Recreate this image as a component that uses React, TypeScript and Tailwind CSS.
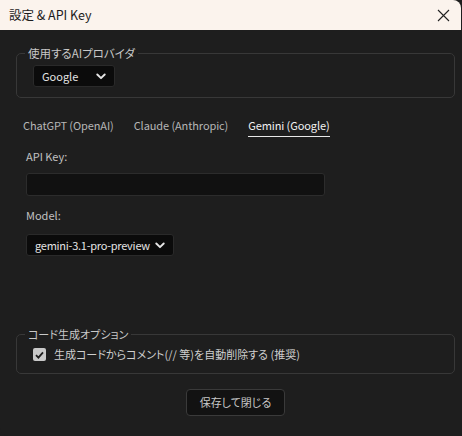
import { useState } from "react";

const font = { fontFamily: '"Noto Sans CJK JP", "Noto Sans", sans-serif' };

function Chevron() {
  return (
    <svg width="10" height="7" viewBox="0 0 10 7" fill="none">
      <path d="M1.3 1.5l3.7 3.7 3.7-3.7" stroke="#e6e6e6" strokeWidth="1.9" strokeLinecap="round" strokeLinejoin="round" />
    </svg>
  );
}

export default function App() {
  const [tab, setTab] = useState("gemini");
  const [strip, setStrip] = useState(true);

  const tabs = [
    { id: "openai", label: "ChatGPT (OpenAI)" },
    { id: "claude", label: "Claude (Anthropic)" },
    { id: "gemini", label: "Gemini (Google)" },
  ];

  return (
    <div className="w-[462px] h-[436px] bg-[#1e1e1e] [font-feature-settings:'palt']" style={font}>
      <div className="w-[461px] h-[436px] bg-[#1e1e1e] rounded-tr-[8px] rounded-bl-[8px] overflow-hidden flex flex-col">
        {/* title bar */}
        <div className="h-[30px] shrink-0 bg-[#fbf3ed] flex items-center justify-between pl-[9px] pr-[11px]">
          <span className="text-[12.5px] text-[#1b1b1b] leading-none">設定 &amp; API Key</span>
          <svg width="13" height="13" viewBox="0 0 13 13">
            <path d="M1 1l11 11M12 1L1 12" stroke="#222" strokeWidth="1.1" />
          </svg>
        </div>

        <div className="flex flex-col pl-[16px] pr-[6px]">
          <fieldset className="mt-[16px] border border-[#383838] rounded-[5px] pl-[8px] pb-[10px]">
            <legend className="px-[3px] text-[11.5px] leading-[15px] text-[#c8c8c8]">使用するAIプロバイダ</legend>
            <div className="pl-[8px] mt-[4px]">
              <button className="w-[82px] h-[22px] bg-[#0b0b0b] border border-[#2a2a2a] rounded-[3px] flex items-center justify-between pl-[8px] pr-[8px] text-[11px] text-[#e4e4e4]">
                Google
                <Chevron />
              </button>
            </div>
          </fieldset>

          {/* tabs */}
          <div className="mt-[20px] pl-[7px] flex gap-[20px]">
            {tabs.map((t) => (
              <button
                key={t.id}
                onClick={() => setTab(t.id)}
                className={
                  tab === t.id
                    ? "text-[11px] leading-[15px] pb-[3px] border-b-[1.5px] border-[#e8e8e8] text-[#f2f2f2] whitespace-nowrap tracking-[-0.1px]"
                    : "text-[11px] leading-[15px] pb-[3px] border-b-[1.5px] border-transparent text-[#b6b6b6] whitespace-nowrap tracking-[-0.1px]"
                }
              >
                {t.label}
              </button>
            ))}
          </div>

          <div className="pl-[10px] flex flex-col items-start">
            <span className="mt-[12px] text-[11px] leading-[15px] text-[#c2c2c2]">API Key:</span>
            <input
              type="password"
              className="mt-[9px] w-[299px] h-[23px] bg-[#111111] border border-[#2c2c2c] rounded-[3px] outline-none text-[11px] text-white px-2"
            />
            <span className="mt-[12px] text-[11px] leading-[15px] text-[#c2c2c2]">Model:</span>
            <button className="mt-[11px] w-[148px] h-[22px] bg-[#0b0b0b] border border-[#2a2a2a] rounded-[3px] flex items-center justify-between pl-[8px] pr-[8px] text-[11px] tracking-[-0.25px] text-[#e4e4e4] whitespace-nowrap">
              gemini-3.1-pro-preview
              <Chevron />
            </button>
          </div>

          <fieldset className="mt-[71px] border border-[#383838] rounded-[5px] pl-[8px] pb-[11px]">
            <legend className="px-[3px] text-[11px] leading-[15px] text-[#c8c8c8]">コード生成オプション</legend>
            <label className="pl-[8px] mt-[5px] flex items-center gap-[8px] cursor-pointer">
              <span
                onClick={() => setStrip(!strip)}
                className="w-[13px] h-[13px] rounded-[2px] bg-[#c9c9c9] flex items-center justify-center"
              >
                {strip && (
                  <svg width="9" height="8" viewBox="0 0 9 8" fill="none">
                    <path d="M1 4.2l2.4 2.4L8 1.3" stroke="#1e1e1e" strokeWidth="1.8" />
                  </svg>
                )}
              </span>
              <span className="text-[11px] leading-[15px] text-[#cfcfcf] whitespace-nowrap">生成コードからコメント(// 等)を自動削除する (推奨)</span>
            </label>
          </fieldset>

          <div className="mt-[15px] flex justify-center">
            <button className="w-[99px] h-[27px] bg-[#121212] border border-[#3a3a3a] rounded-[4px] text-[11px] text-[#c8c8c8]">
              保存して閉じる
            </button>
          </div>
        </div>
      </div>
    </div>
  );
}
